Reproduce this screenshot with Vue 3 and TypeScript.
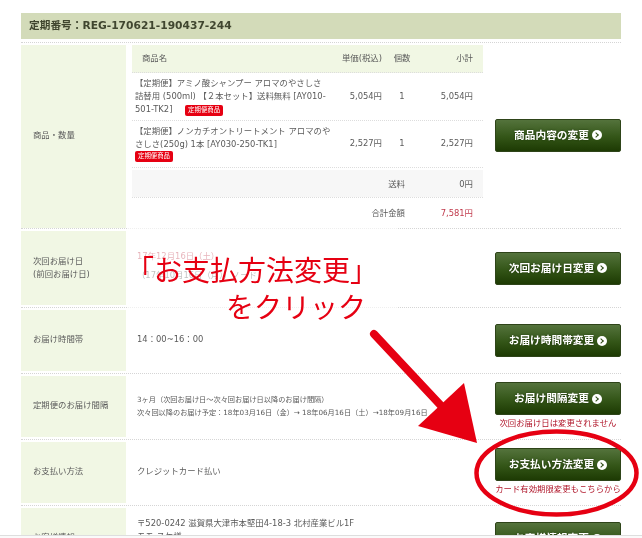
<script setup lang="ts">
interface Item {
  name: string;
  code: string;
  price: string;
  qty: number;
  subtotal: string;
  tagBelow: boolean;
}

const items: Item[] = [
  {
    name: '【定期便】アミノ酸シャンプー アロマのやさしさ 詰替用 (500ml) 【２本セット】送料無料 [AY010-501-TK2]',
    code: 'AY010',
    price: '5,054円',
    qty: 1,
    subtotal: '5,054円',
    tagBelow: false,
  },
  {
    name: '【定期便】ノンカチオントリートメント アロマのやさしさ(250g) 1本 [AY030-250-TK1]',
    code: 'AY030',
    price: '2,527円',
    qty: 1,
    subtotal: '2,527円',
    tagBelow: true,
  },
];
</script>

<template>
  <div class="page">
    <h2 class="title">定期番号：REG-170621-190437-244</h2>

    <section class="row row-items">
      <div class="label">商品・数量</div>
      <div class="body table-wrap">
        <div class="tr th">
          <span class="c-name">商品名</span>
          <span class="c-price">単価(税込)</span>
          <span class="c-qty">個数</span>
          <span class="c-sub">小計</span>
        </div>
        <div v-for="item in items" :key="item.code" class="tr item">
          <span class="c-name name">
            {{ item.name }}
            <em class="tag" :class="{ below: item.tagBelow }">定期便商品</em>
          </span>
          <span class="c-price">{{ item.price }}</span>
          <span class="c-qty">{{ item.qty }}</span>
          <span class="c-sub">{{ item.subtotal }}</span>
        </div>
        <div class="tr sum shipping">
          <span class="sum-label">送料</span>
          <span class="c-sub">0円</span>
        </div>
        <div class="tr sum total">
          <span class="sum-label">合計金額</span>
          <span class="c-sub red">7,581円</span>
        </div>
      </div>
      <div class="action">
        <a class="btn">商品内容の変更<i class="go"></i></a>
      </div>
    </section>

    <section class="row row-next">
      <div class="label">次回お届け日<br />(前回お届け日)</div>
      <div class="body">
        <p class="red">17年12月16日（土）</p>
        <p>（17年10月16日（月））ノード</p>
      </div>
      <div class="action">
        <a class="btn">次回お届け日変更<i class="go"></i></a>
      </div>
    </section>

    <section class="row">
      <div class="label">お届け時間帯</div>
      <div class="body"><p>14：00~16：00</p></div>
      <div class="action">
        <a class="btn">お届け時間帯変更<i class="go"></i></a>
      </div>
    </section>

    <section class="row">
      <div class="label">定期便のお届け間隔</div>
      <div class="body small">
        <p>3ヶ月（次回お届け日～次々回お届け日以降のお届け間隔）</p>
        <p>次々回以降のお届け予定：18年03月16日（金）→ 18年06月16日（土）→18年09月16日</p>
      </div>
      <div class="action">
        <a class="btn">お届け間隔変更<i class="go"></i></a>
        <small class="note">次回お届け日は変更されません</small>
      </div>
    </section>

    <section class="row">
      <div class="label">お支払い方法</div>
      <div class="body"><p>クレジットカード払い</p></div>
      <div class="action">
        <a class="btn">お支払い方法変更<i class="go"></i></a>
        <small class="note">カード有効期限変更もこちらから</small>
      </div>
    </section>

    <section class="row row-last">
      <div class="label">お客様情報</div>
      <div class="body">
        <p>〒520-0242 滋賀県大津市本堅田4-18-3 北村産業ビル1F</p>
        <p>モモ スケ様</p>
      </div>
      <div class="action">
        <a class="btn">お客様情報変更<i class="go"></i></a>
      </div>
    </section>

    <!-- 注釈 -->
    <div class="veil"></div>
    <div class="callout">
      <div>「お支払方法変更」</div>
      <div>をクリック</div>
    </div>
    <svg class="marks" width="642" height="538" viewBox="0 0 642 538">
      <line x1="374" y1="334" x2="446" y2="411" stroke="#e60012" stroke-width="8" stroke-linecap="round" />
      <polygon points="464,383 418,426 477,443" fill="#e60012" />
      <ellipse cx="556.5" cy="473" rx="80" ry="41.5" fill="none" stroke="#e60012" stroke-width="4.5" />
    </svg>
    <div class="edge"></div>
  </div>
</template>

<style>
html,
body {
  margin: 0;
  background: #fff;
}
</style>

<style scoped>
.page {
  position: relative;
  box-sizing: border-box;
  width: 642px;
  height: 538px;
  padding: 13px 21px 0;
  overflow: hidden;
  font-family: "DejaVu Sans", "Noto Sans CJK JP", sans-serif;
  font-size: 8.4px;
  line-height: 13px;
  color: #5a5a5a;
  background: #fff;
  filter: blur(0.3px);
}

.title {
  margin: 0 0 3px;
  padding: 0 8px;
  height: 26px;
  line-height: 26px;
  font-size: 10.7px;
  font-weight: 700;
  color: #40462f;
  background: #d3dbb9;
}

.row {
  display: grid;
  grid-template-columns: 105px 1fr 126px;
  column-gap: 5px;
  height: 66px;
  padding: 2px 0;
  box-sizing: border-box;
  border-top: 1px dotted #d5d5d5;
}

.row-items {
  height: 186px;
  padding-bottom: 1px;
  column-gap: 0;
}

.row-items .label,
.row-items .action {
  padding-bottom: 3px;
}

.row-next {
  height: 79px;
}

.row-next .body {
  padding-bottom: 5px;
}

.label {
  display: flex;
  align-items: center;
  padding-left: 12px;
  padding-bottom: 2px;
  background: #f1f7e4;
}

.row-next .label {
  padding-bottom: 0;
}

.body {
  display: flex;
  flex-direction: column;
  justify-content: center;
  padding-left: 6px;
  padding-bottom: 2px;
}

.body p {
  margin: 0;
  line-height: 19px;
}

.body.small {
  font-size: 7.2px;
}

.body.small p {
  line-height: 13px;
  white-space: nowrap;
}

.row-last .body {
  justify-content: flex-start;
  padding-top: 9px;
}

.row-last .body p {
  line-height: 13px;
}

.action {
  display: flex;
  flex-direction: column;
  justify-content: center;
  align-items: center;
}

.action:has(.note) {
  justify-content: flex-start;
  padding-top: 6px;
}

.btn {
  box-sizing: border-box;
  display: flex;
  align-items: center;
  justify-content: center;
  flex: none;
  width: 126px;
  height: 33px;
  font-size: 10.7px;
  font-weight: 700;
  color: #fff;
  text-shadow: 0 0 2px rgba(20, 40, 0, 0.8);
  border: 1px solid #2e4419;
  border-radius: 2px;
  background: linear-gradient(#54733c, #335517 55%, #1d3a03);
}

.go {
  position: relative;
  flex: none;
  width: 10px;
  height: 10px;
  margin-left: 3px;
  border-radius: 50%;
  background: #fff;
}

.go::after {
  content: "";
  position: absolute;
  left: 2px;
  top: 3px;
  width: 3px;
  height: 3px;
  border: solid #2e4a14;
  border-width: 1.5px 1.5px 0 0;
  transform: rotate(45deg);
}

.note {
  margin-top: 2px;
  font-size: 8.4px;
  line-height: 12px;
  color: #b0162a;
  white-space: nowrap;
}

.table-wrap {
  display: block;
  margin-left: 6px;
  padding: 0;
  width: 351px;
}

.tr {
  display: flex;
  align-items: center;
  box-sizing: border-box;
  border-bottom: 1px dotted #ddd;
}

.th {
  height: 28px;
  padding-bottom: 1px;
  background: #f1f7e4;
}

.item {
  height: 47.5px;
}

.sum {
  justify-content: flex-end;
}

.shipping {
  height: 30px;
  padding-top: 3px;
  background: linear-gradient(#fff 2px, #f7f7f7 2px);
}

.total {
  height: 30px;
  border-bottom: 0;
}

.c-name {
  flex: none;
  box-sizing: border-box;
  width: 199px;
  padding-left: 10px;
}

.name {
  padding-left: 3px;
  line-height: 13px;
}

.c-price {
  flex: 1;
  text-align: right;
  padding-right: 10px;
}

.c-qty {
  flex: none;
  width: 20px;
  text-align: center;
}

.c-sub {
  flex: none;
  box-sizing: border-box;
  width: 71px;
  padding-right: 10px;
  text-align: right;
}

.sum-label {
  margin-right: 7px;
  text-align: right;
}

.red {
  color: #c0394b;
}

.tag {
  display: inline-block;
  margin-left: 10px;
  padding: 0 3px;
  font-size: 6.4px;
  line-height: 11px;
  font-style: normal;
  color: #fff;
  background: #e60012;
  border-radius: 2px;
}

.tag.below {
  display: block;
  width: fit-content;
  margin-left: 0;
}

.veil {
  position: absolute;
  left: 127px;
  top: 226px;
  width: 270px;
  height: 84px;
  background: rgba(255, 255, 255, 0.62);
}

.callout {
  position: absolute;
  left: 126px;
  top: 251px;
  width: 240px;
  font-family: "Noto Sans CJK JP", sans-serif;
  font-size: 28px;
  line-height: 37px;
  color: #e60012;
  text-align: right;
  white-space: nowrap;
}

.marks {
  position: absolute;
  left: 0;
  top: 0;
}

.edge {
  position: absolute;
  left: 0;
  right: 0;
  bottom: 0;
  height: 2px;
  background: #fafafa;
  border-top: 1px solid #dedede;
}
</style>
